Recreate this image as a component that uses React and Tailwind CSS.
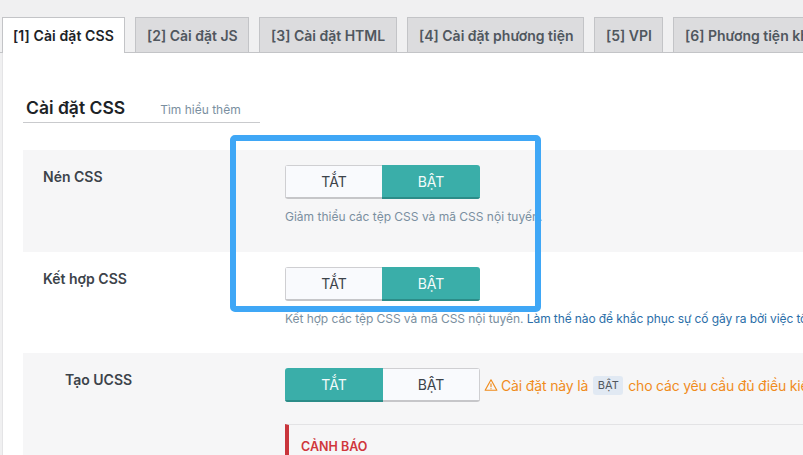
const font = { fontFamily: '"Inter", "Noto Sans", sans-serif' };

const tabs = [
  ["[2] Cài đặt JS", "w-[114px]"],
  ["[3] Cài đặt HTML", "w-[138px]"],
  ["[4] Cài đặt phương tiện", "w-[177px]"],
  ["[5] VPI", "w-[69px]"],
  ["[6] Phương tiện không được tối ưu", "w-[260px]"],
];

function Toggle({ on }) {
  const active = "bg-[#3aaea9] text-[#f2fbfa] border-b-[2px] border-b-[#2c8c88]";
  const idle = "bg-[#f9fafd] text-[#3c434a] border border-[#cfcfd2] border-b-[2px] border-b-[#c6c6c9]";
  return (
    <div className="flex h-[34px] w-[195px] shrink-0 rounded-[3px] overflow-hidden">
      <div className={`flex items-center justify-center text-[14px] ${on ? `w-[97px] ${idle} border-r-0` : `w-[98px] ${active}`}`}>TẮT</div>
      <div className={`flex items-center justify-center text-[14px] ${on ? `w-[98px] ${active}` : `w-[97px] ${idle} border-l-0`}`}>BẬT</div>
    </div>
  );
}

function Row({ label, children, className, labelClass = "pl-5 w-[262px]" }) {
  return (
    <div className={`flex pt-[15px] ${className}`}>
      <div className={`${labelClass} shrink-0 text-[14px] font-semibold text-[#3c434a] leading-[24px]`}>{label}</div>
      <div className="min-w-0 flex-1">{children}</div>
    </div>
  );
}

export default function App() {
  return (
    <div style={font} className="relative h-[455px] w-[803px] overflow-hidden bg-[#f0f0f1]">
      <div className="flex h-[53px] items-end gap-[10px] border-b border-[#c3c4c7] pl-[2px] whitespace-nowrap">
        <div className="-mb-px flex h-[36px] w-[123px] shrink-0 items-center justify-center border border-b-0 border-[#c3c4c7] bg-white text-[14px] font-semibold tracking-[0.1px] text-[#1d2327]">
          [1] Cài đặt CSS
        </div>
        {tabs.map(([t, w]) => (
          <div key={t} className={`flex h-[35px] ${w} shrink-0 items-center justify-start overflow-hidden pl-[11px] border border-b-0 border-[#c3c4c7] bg-[#dcdcde] text-[14px] font-semibold text-[#50575e]`}>
            {t}
          </div>
        ))}
      </div>
      <div className="ml-[2px] h-[402px] border-l border-[#e4e4e6] bg-white pl-[20px]">
        <div className="flex h-[70px] w-[237px] items-end border-b border-[#c9cacd] pl-[3px]">
          <span className="text-[17.5px] font-semibold leading-[28px] text-[#1d2327]">Cài đặt CSS</span>
          <span className="ml-[35px] text-[12px] leading-[24px] text-[#7a8fa0]">Tìm hiểu thêm</span>
        </div>
        <div className="h-[27px]" />
        <Row label="Nén CSS" className="h-[102px] bg-[#f6f6f7]">
          <Toggle on />
          <p className="mt-[9px] whitespace-nowrap text-[12px] leading-[18px] text-[#7a8fa0]">Giảm thiểu các tệp CSS và mã CSS nội tuyến.</p>
        </Row>
        <Row label="Kết hợp CSS" className="h-[101px] bg-white">
          <Toggle on />
          <p className="mt-[9px] whitespace-nowrap text-[12px] leading-[18px] text-[#7a8fa0]">
            <span className="tracking-[-0.05px]">Kết hợp các tệp CSS và mã CSS nội tuyến.</span>{" "}
            <span className="tracking-[-0.1px] text-[#2a6ea8]">Làm thế nào để khắc phục sự cố gây ra bởi việc tối ưu hóa CSS</span>
          </p>
        </Row>
        <Row label="Tạo UCSS" labelClass="pl-[42px] w-[262px]" className="h-[110px] bg-[#f6f6f7]">
          <div className="flex items-center whitespace-nowrap">
            <Toggle on={false} />
            <svg viewBox="0 0 24 24" className="ml-[4px] h-[14px] w-[14px] shrink-0" fill="none" stroke="#f08c1d" strokeWidth="2" strokeLinecap="round" strokeLinejoin="round">
              <path d="M12 3 2 21h20L12 3z" />
              <path d="M12 10v5M12 18v.5" />
            </svg>
            <span className="ml-[3px] shrink-0 text-[14px] tracking-[-0.15px] text-[#f08c1d]">Cài đặt này là</span>
            <span className="mx-[5px] flex h-[19px] w-[30px] shrink-0 items-center justify-center rounded-[3px] bg-[#e1e9f3] text-[11px] text-[#50575e]">BẬT</span>
            <span className="shrink-0 text-[14px] tracking-[-0.2px] text-[#f08c1d]">cho các yêu cầu đủ điều kiện</span>
          </div>
          <div className="mt-[22px] h-[40px] border-l-[4px] border-t border-l-[#c9353c] border-t-[#e3e3e5] pl-[12px] pt-[13px] text-[12.5px] font-semibold leading-[18px] text-[#d0363c]">
            CẢNH BÁO
          </div>
        </Row>
      </div>
      <div className="absolute left-[230px] top-[135px] h-[177px] w-[311px] rounded-[5px] border-[6px] border-[#3fa7f6]" />
    </div>
  );
}
